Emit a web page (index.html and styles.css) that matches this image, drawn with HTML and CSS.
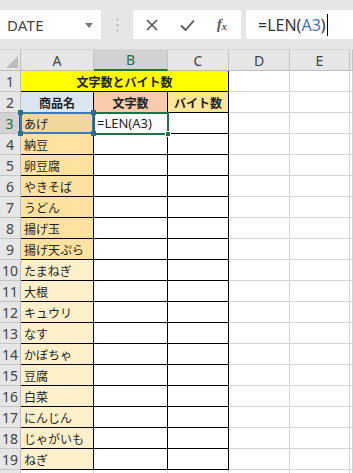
FILE: index.html
```html
<!DOCTYPE html>
<html lang="ja">
<head>
<meta charset="utf-8">
<link rel="stylesheet" href="styles.css">
</head>
<body>
<div class="app">
  <div class="toolbar">
    <div class="namebox">
      <span class="name">DATE</span>
      <svg class="dd" width="8" height="5" viewBox="0 0 8 5"><path d="M0 0H8L4 5Z" fill="#7a7a7a"/></svg>
    </div>
    <div class="sep">
      <svg width="3" height="14" viewBox="0 0 3 14"><circle cx="1.5" cy="1.5" r="1.1" fill="#b0b0b0"/><circle cx="1.5" cy="7" r="1.1" fill="#b0b0b0"/><circle cx="1.5" cy="12.5" r="1.1" fill="#b0b0b0"/></svg>
    </div>
    <div class="fbtns">
      <svg class="btn" width="12" height="12" viewBox="0 0 12 12"><path d="M1 1L11 11M11 1L1 11" stroke="#555" stroke-width="1.6"/></svg>
      <svg class="btn" width="15" height="12" viewBox="0 0 15 12"><path d="M1 6.5L5.5 11L14 1.5" stroke="#555" stroke-width="1.8" fill="none"/></svg>
      <span class="fx">f<sub>x</sub></span>
    </div>
    <div class="fbar">
      <span>=LEN(</span><span class="ref">A3</span><span>)</span><span class="caret"></span>
    </div>
  </div>

  <div class="sheet">
    <div class="corner"><svg width="12" height="12" viewBox="0 0 12 12"><path d="M12 0V12H0Z" fill="#bcbcbc"/></svg></div>
    <div class="ch">A</div>
    <div class="ch sel">B</div>
    <div class="ch">C</div>
    <div class="ch">D</div>
    <div class="ch">E</div>
    <div class="ch"></div>

    <div class="rh">1</div>
    <div class="c title">文字数とバイト数</div>
    <div class="g"></div><div class="g"></div><div class="g"></div>

    <div class="rh">2</div>
    <div class="c hd h-a">商品名</div>
    <div class="c hd h-b">文字数</div>
    <div class="c hd h-c">バイト数</div>
    <div class="g"></div><div class="g"></div><div class="g"></div>

    <div class="rh sel">3</div>
    <div class="c a a3"><span>あげ</span><i class="h tl"></i><i class="h tr"></i><i class="h bl"></i><i class="h br"></i></div>
    <div class="c active"><span>=LEN(A3)</span><i class="fill"></i></div>
    <div class="c"></div>
    <div class="g"></div><div class="g"></div><div class="g"></div>

    <div class="rh">4</div><div class="c a a1">納豆</div><div class="c"></div><div class="c"></div><div class="g"></div><div class="g"></div><div class="g"></div>
    <div class="rh">5</div><div class="c a a1">卵豆腐</div><div class="c"></div><div class="c"></div><div class="g"></div><div class="g"></div><div class="g"></div>
    <div class="rh">6</div><div class="c a a1">やきそば</div><div class="c"></div><div class="c"></div><div class="g"></div><div class="g"></div><div class="g"></div>
    <div class="rh">7</div><div class="c a a1">うどん</div><div class="c"></div><div class="c"></div><div class="g"></div><div class="g"></div><div class="g"></div>
    <div class="rh">8</div><div class="c a a1">揚げ玉</div><div class="c"></div><div class="c"></div><div class="g"></div><div class="g"></div><div class="g"></div>
    <div class="rh">9</div><div class="c a a1">揚げ天ぷら</div><div class="c"></div><div class="c"></div><div class="g"></div><div class="g"></div><div class="g"></div>
    <div class="rh">10</div><div class="c a a2">たまねぎ</div><div class="c"></div><div class="c"></div><div class="g"></div><div class="g"></div><div class="g"></div>
    <div class="rh">11</div><div class="c a a2">大根</div><div class="c"></div><div class="c"></div><div class="g"></div><div class="g"></div><div class="g"></div>
    <div class="rh">12</div><div class="c a a2">キュウリ</div><div class="c"></div><div class="c"></div><div class="g"></div><div class="g"></div><div class="g"></div>
    <div class="rh">13</div><div class="c a a2">なす</div><div class="c"></div><div class="c"></div><div class="g"></div><div class="g"></div><div class="g"></div>
    <div class="rh">14</div><div class="c a a2">かぼちゃ</div><div class="c"></div><div class="c"></div><div class="g"></div><div class="g"></div><div class="g"></div>
    <div class="rh">15</div><div class="c a a2">豆腐</div><div class="c"></div><div class="c"></div><div class="g"></div><div class="g"></div><div class="g"></div>
    <div class="rh">16</div><div class="c a a2">白菜</div><div class="c"></div><div class="c"></div><div class="g"></div><div class="g"></div><div class="g"></div>
    <div class="rh">17</div><div class="c a a2">にんじん</div><div class="c"></div><div class="c"></div><div class="g"></div><div class="g"></div><div class="g"></div>
    <div class="rh">18</div><div class="c a a2">じゃがいも</div><div class="c"></div><div class="c"></div><div class="g"></div><div class="g"></div><div class="g"></div>
    <div class="rh">19</div><div class="c a a2">ねぎ</div><div class="c"></div><div class="c"></div><div class="g"></div><div class="g"></div><div class="g"></div>
    <div class="rh"></div><div class="g"></div><div class="g"></div><div class="g"></div><div class="g"></div><div class="g"></div><div class="g"></div>
  </div>
</div>
</body>
</html>
```

FILE: styles.css
```css
* { box-sizing: border-box; }
html, body { margin: 0; padding: 0; }
body {
  width: 353px;
  height: 473px;
  overflow: hidden;
  background: #fff;
  font-family: "Noto Sans", "Noto Sans CJK JP", sans-serif;
}
.app { width: 353px; }

.toolbar {
  height: 50px;
  background: #e6e6e6;
  display: flex;
  align-items: flex-start;
  padding-top: 10px;
  border-bottom: 1px solid #d6d6d6;
}
.namebox {
  width: 101px;
  height: 29px;
  background: #fff;
  display: flex;
  align-items: center;
  padding-left: 7px;
  padding-right: 8px;
  justify-content: space-between;
}
.name { font-size: 15px; color: #444; letter-spacing: 0.2px; }
.dd { margin-top: 1px; }
.sep {
  width: 32px;
  height: 29px;
  display: flex;
  align-items: center;
  justify-content: center;
}
.fbtns {
  width: 108px;
  height: 29px;
  background: #fff;
  display: flex;
  align-items: center;
  padding-left: 13px;
}
.fbtns .btn:first-child { margin-right: 22px; }
.fbtns .btn:nth-child(2) { margin-right: 22px; }
.fx {
  font-family: "Liberation Serif", serif;
  font-style: italic;
  font-size: 14px;
  color: #555;
  font-weight: bold;
}
.fx sub { font-size: 10px; vertical-align: -1px; }
.fbar {
  margin-left: 5px;
  flex: 1;
  height: 29px;
  background: #fff;
  display: flex;
  align-items: center;
  padding-left: 12px;
  font-size: 16px;
  color: #333;
}
.fbar .ref { color: #4472c4; }
.caret {
  width: 1px;
  height: 22px;
  background: #000;
  margin-left: 1px;
}

.sheet {
  display: grid;
  grid-template-columns: 21px 73px 74px 61px 61px 60px 1fr;
  grid-auto-rows: 21px;
  font-family: "Noto Sans CJK JP", sans-serif;
}
.sheet > div {
  border-right: 1px solid #d4d4d4;
  border-bottom: 1px solid #d4d4d4;
  display: flex;
  align-items: center;
  min-width: 0;
}
.corner {
  background: #e6e6e6;
  justify-content: flex-end;
  align-items: flex-end !important;
  padding: 0 2px 2px 0;
  border-right-color: #bdbdbd !important;
  border-bottom-color: #bdbdbd !important;
}
.ch {
  background: #e6e6e6;
  justify-content: center;
  font-family: "Noto Sans", sans-serif;
  font-size: 14px;
  color: #444;
  border-right-color: #c4c4c4 !important;
  border-bottom-color: #bdbdbd !important;
}
.ch.sel {
  background: #d2d2d2;
  color: #217346;
  border-bottom: 2px solid #217346 !important;
}
.rh {
  background: #e6e6e6;
  justify-content: center;
  font-family: "Noto Sans", sans-serif;
  font-size: 14px;
  color: #444;
  border-right-color: #bdbdbd !important;
  border-bottom-color: #c4c4c4 !important;
}
.rh.sel {
  background: #d2d2d2;
  color: #217346;
  border-right: 2px solid #217346 !important;
}
.sheet > .c {
  border-right-color: #000;
  border-bottom-color: #000;
  font-size: 12px;
  color: #222;
  padding-left: 3px;
  position: relative;
}
.title {
  grid-column: span 3;
  background: #ffff00;
  justify-content: center;
  font-weight: bold;
  font-size: 12px;
  padding-left: 0 !important;
}
.hd {
  justify-content: center;
  font-weight: bold;
  padding-left: 0 !important;
}
.h-a { background: #dce6f1; }
.h-b { background: #f8cbad; }
.h-c { background: #ffe699; }
.a1 { background: #ffe29f; }
.a2 { background: #fff0cc; }
.a3 { background: #f1d79e; }
.a3::after {
  content: "";
  position: absolute;
  left: -1px; top: -1px; right: -1px; bottom: -1px;
  border: 2px solid #3b77c2;
  pointer-events: none;
}
.h {
  position: absolute;
  width: 5px;
  height: 5px;
  background: #2e6e86;
  z-index: 3;
}
.h.tl { left: -3px; top: -3px; }
.h.tr { right: -3px; top: -3px; }
.h.bl { left: -3px; bottom: -3px; }
.h.br { right: -3px; bottom: -3px; }
.active { font-family: "Noto Sans", sans-serif; font-size: 13px !important; }
.active::after {
  content: "";
  position: absolute;
  left: -1px; top: -1px; right: -2px; bottom: -2px;
  border: 2px solid #217346;
  pointer-events: none;
  z-index: 2;
}
.fill {
  position: absolute;
  width: 6px;
  height: 6px;
  right: -4px;
  bottom: -4px;
  background: #217346;
  border: 1px solid #fff;
  z-index: 4;
}
```
